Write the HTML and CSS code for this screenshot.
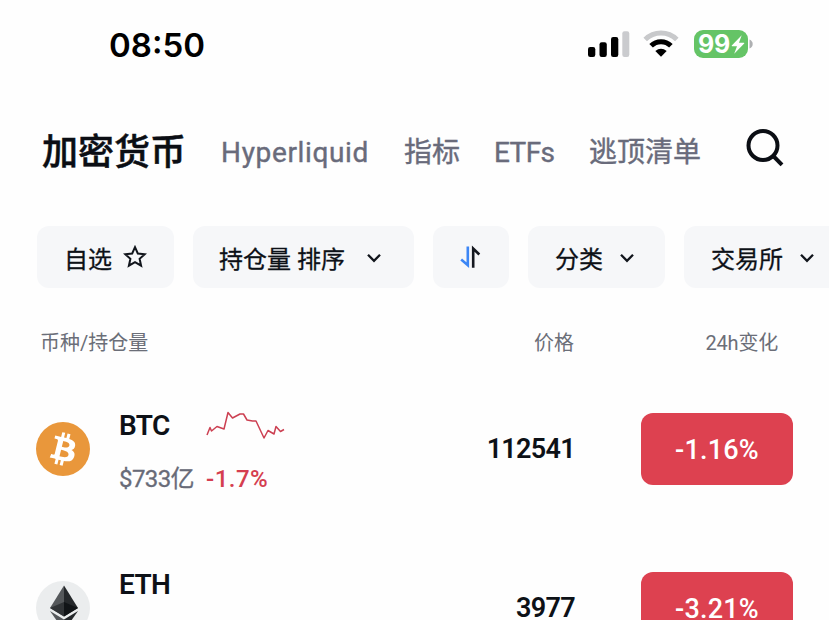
FILE: index.html
```html
<!DOCTYPE html>
<html lang="zh-CN">
<head>
<meta charset="utf-8">
<title>加密货币</title>
<link rel="stylesheet" href="styles.css">
</head>
<body>
<div class="screen">
  <header class="status">
    <span class="clock">08:50</span>
    <div class="status-icons">
      <svg class="signal" width="42" height="28" viewBox="0 0 42 28"><rect x="0" y="17" width="7.3" height="10" rx="2.2"/><rect x="11.5" y="12.3" width="7.3" height="14.7" rx="2.2"/><rect x="23" y="7" width="7.3" height="20" rx="2.2"/><rect x="34.3" y="1.3" width="7" height="25.7" rx="2.2" fill="#cacbce"/></svg>
      <svg class="wifi" width="36" height="28" viewBox="0 0 36 28"><path d="M2.2 9.5 A22.5 22.5 0 0 1 33.8 9.5" fill="none" stroke="#c8c9cb" stroke-width="5"/><path d="M8.1 15.8 A14 14 0 0 1 27.9 15.8" fill="none" stroke="#000" stroke-width="5"/><path d="M18 26.8 L12.3 21.1 Q18 16.2 23.7 21.1 Z"/></svg>
      <div class="battery"><span>99</span><svg width="14" height="19" viewBox="0 0 14 19"><path d="M10.7 .3 L.8 10.5 Q.3 11.2 1.2 11.2 H6 L3.2 18.7 L13.2 8.4 Q13.7 7.7 12.8 7.7 H8 Z" fill="#fff"/></svg></div>
      <svg class="cap" width="4" height="10" viewBox="0 0 4 10"><path d="M.5 .5 Q3.7 2 3.7 5 T.5 9.5Z" fill="#aeb0b2"/></svg>
    </div>
  </header>

  <nav class="tabs">
    <span class="tab active">加密货币</span>
    <span class="tab hyper">Hyperliquid</span>
    <span class="tab">指标</span>
    <span class="tab etfs">ETFs</span>
    <span class="tab">逃顶清单</span>
    <svg class="search" width="40" height="40" viewBox="0 0 40 40" fill="none" stroke="#0b0e14" stroke-width="4"><circle cx="18" cy="17.5" r="14.5"/><path d="M27.8 27.5 L37 36.8"/></svg>
  </nav>

  <div class="filters">
    <div class="chip fav"><span>自选</span><svg width="24" height="24" viewBox="0 0 24 24" fill="none" stroke="#11151c" stroke-width="2"><path d="M12 2.2 L14.8 8.5 L21.8 9.2 L16.6 13.8 L18.1 20.7 L12 17.1 L5.9 20.7 L7.4 13.8 L2.2 9.2 L9.2 8.5 Z"/></svg></div>
    <div class="chip order"><span>持仓量 排序</span><svg class="chev" width="16" height="10" viewBox="0 0 16 10"><path d="M2 1.8 L8 7.8 L14 1.8"/></svg></div>
    <div class="chip sort"><svg width="24" height="24" viewBox="0 0 24 24" fill="none" stroke-width="2.6"><path d="M8.8 1.5 V20.2 L2.2 14.5" stroke="#3c86f5"/><path d="M14.2 22.8 V3.5 L20.3 9.5" stroke="#151820"/></svg></div>
    <div class="chip kind"><span>分类</span><svg class="chev" width="16" height="10" viewBox="0 0 16 10"><path d="M2 1.8 L8 7.8 L14 1.8"/></svg></div>
    <div class="chip exchange"><span>交易所</span><svg class="chev" width="16" height="10" viewBox="0 0 16 10"><path d="M2 1.8 L8 7.8 L14 1.8"/></svg></div>
  </div>

  <div class="heads"><span>币种/持仓量</span><span class="price-head">价格</span><span class="change-head">24h变化</span></div>

  <main>
    <section class="row">
      <svg class="coin" width="54" height="54" viewBox="0 0 32 32"><circle cx="16" cy="16" r="16" fill="#e9973b"/><path fill="#fff" d="M23.189 14.02c.314-2.096-1.283-3.223-3.465-3.975l.708-2.84-1.728-.43-.69 2.765c-.454-.114-.92-.22-1.385-.326l.695-2.783L15.596 6l-.708 2.839c-.376-.086-.746-.17-1.104-.26l.002-.009-2.384-.595-.46 1.846s1.283.294 1.256.312c.7.175.826.638.805 1.006l-.806 3.235c.048.012.11.03.18.057l-.183-.045-1.13 4.532c-.086.212-.303.531-.793.41.018.025-1.256-.313-1.256-.313l-.858 1.978 2.25.561c.418.105.828.215 1.231.318l-.715 2.872 1.727.43.708-2.84c.472.127.93.245 1.378.357l-.706 2.828 1.728.43.715-2.866c2.948.558 5.164.333 6.097-2.333.752-2.146-.037-3.385-1.588-4.192 1.13-.26 1.98-1.003 2.207-2.538zm-3.95 5.538c-.533 2.147-4.148.986-5.32.695l.95-3.805c1.172.293 4.929.872 4.37 3.11zm.535-5.569c-.487 1.953-3.495.96-4.47.717l.86-3.45c.975.243 4.118.696 3.61 2.733z"/></svg>
      <div class="info">
        <div class="line"><span class="name">BTC</span><svg class="spark" width="80" height="30" viewBox="0 0 80 30"><path d="M1 25 L4 17.5 L5.5 21 L11 16.5 L18 19 L22 2.5 L26.5 8 L34 4 H37.5 L41 10 L46.5 11 L50 11 L58 28 L62 20.5 L68 24 L70 16.5 L74.5 21.5 L78 19.5" fill="none" stroke="#cc4052" stroke-width="1.5" stroke-linejoin="round"/></svg></div>
        <div class="line sub"><span class="hold">$733亿</span><span class="down">-1.7%</span></div>
      </div>
      <span class="price">112541</span>
      <span class="change">-1.16%</span>
    </section>
    <section class="row">
      <svg class="coin" width="54" height="54" viewBox="0 0 54 54"><circle cx="27" cy="27" r="27" fill="#ebedee"/><path d="M28 4.5 L14 27 L28 35.5Z" fill="#55585b"/><path d="M28 4.5 L42 27 L28 35.5Z" fill="#25282b"/><path d="M28 21 L14 27 L28 35.5Z" fill="#303336"/><path d="M28 21 L42 27 L28 35.5Z" fill="#111417"/><path d="M14 30 L28 38.5 V50Z" fill="#55585b"/><path d="M42 30 L28 38.5 V50Z" fill="#25282b"/></svg>
      <div class="info"><div class="line"><span class="name">ETH</span></div></div>
      <span class="price">3977</span>
      <span class="change">-3.21%</span>
    </section>
  </main>
</div>
</body>
</html>
```

FILE: styles.css
```css
* { box-sizing: border-box; }
body { margin: 0; background: #fefefe; font-family: Roboto, "Noto Sans CJK SC", sans-serif; color: #0d1117; }
.screen { width: 829px; height: 620px; overflow: hidden; white-space: nowrap; }
svg { display: block; flex: none; }

.status { display: flex; justify-content: space-between; align-items: center; height: 90px; padding: 0 76px 0 109px; }
.clock { font: 600 33px/40px Inter, sans-serif; color: #000; }
.status-icons { display: flex; align-items: center; height: 30px; margin-top: -2px; }
.wifi { margin-left: 13px; }
.battery { display: flex; align-items: center; gap: 1px; width: 54px; height: 28px; margin-left: 15px; padding-left: 4px; border-radius: 9px; background: #65c466; color: #fff; font: 700 25px/28px Inter, sans-serif; letter-spacing: -.3px; }
.cap { margin-left: 1px; }

.tabs { display: flex; align-items: center; height: 124px; padding-left: 42px; color: #696b7b; font-size: 28px; line-height: 40px; }
.tab { padding-top: 1px; -webkit-text-stroke: .4px currentColor; }
.tab + .tab { margin-left: 35px; }
.tab.active { color: #0b0e14; font-size: 36px; font-weight: 500; -webkit-text-stroke: .5px currentColor; }
.tab.hyper { letter-spacing: .65px; }
.tab.etfs { width: 60px; margin-left: 34px; letter-spacing: -.6px; }
.search { margin: -8px 0 0 44px; }

.filters { display: flex; gap: 19px; margin-top: 12px; padding-left: 37px; }
.chip { display: flex; flex: none; align-items: center; height: 62px; border-radius: 12px; background: #f6f7f9; font-size: 24px; line-height: 36px; -webkit-text-stroke: .3px currentColor; }
.chip span { padding-top: 5px; }
.chev { margin-top: 2px; fill: none; stroke: #11151c; stroke-width: 2.3; }
.fav { width: 137px; padding-left: 27px; gap: 11px; }
.order { width: 221px; padding-left: 26px; gap: 21px; }
.sort { width: 76px; justify-content: center; }
.kind { width: 137px; padding-left: 27px; gap: 16px; }
.exchange { width: 160px; padding-left: 27px; gap: 16px; }

.heads { display: grid; grid-template-columns: 434px 100px 204px; height: 69px; padding: 40px 0 0 40px; color: #6b6e78; font-size: 20px; line-height: 30px; }
.price-head { text-align: right; }
.change-head { text-align: right; letter-spacing: -.2px; }

.row { display: flex; align-items: center; height: 159px; padding-left: 36px; }
main { padding-top: 12px; }
.coin { margin-right: 29px; }
.info { align-self: flex-start; width: 180px; padding-top: 40px; }
.line { display: flex; align-items: center; height: 32px; }
.name { width: 87px; font-size: 28px; font-weight: 600; letter-spacing: -.6px; }
.sub { margin-top: 22px; font-size: 24px; line-height: 32px; color: #686b78; }
.hold { width: 87px; margin-top: 0; letter-spacing: -.6px; -webkit-text-stroke: .3px currentColor; }
.down { color: #d53e50; font-weight: 500; letter-spacing: .5px; }
.price { width: 276px; padding-top: 1px; text-align: right; font-size: 27px; font-weight: 600; letter-spacing: -.7px; }
.change { width: 152px; height: 72px; margin-left: 66px; border-radius: 12px; background: #dd4150; color: #fff; text-align: center; font-size: 27px; font-weight: 500; line-height: 75px; letter-spacing: .2px; }
```
